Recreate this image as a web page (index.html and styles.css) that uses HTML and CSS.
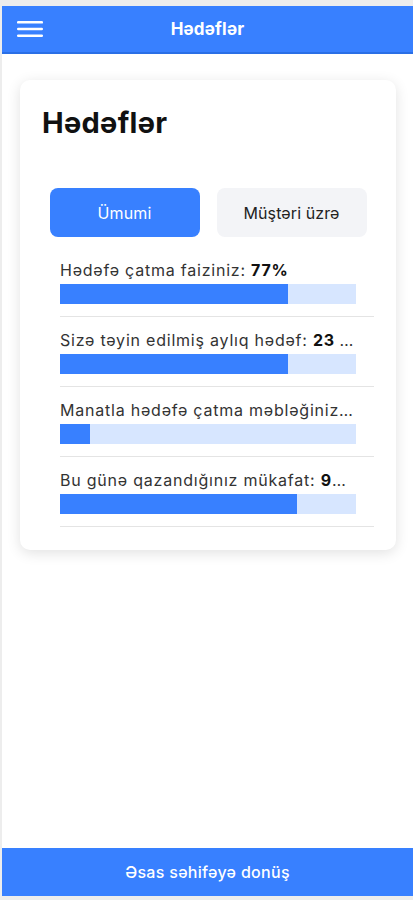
FILE: index.html
```html
<!DOCTYPE html>
<html lang="az">
<head>
<meta charset="utf-8">
<title>Hədəflər</title>
<link rel="stylesheet" href="styles.css">
</head>
<body>
<div class="app">
  <header class="topbar">
    <button class="menu" aria-label="Menu">
      <svg width="26" height="18" viewBox="0 0 26 18"><rect x="0" y="1" width="26" height="2.6" rx="1.2" fill="#fff"/><rect x="0" y="7.7" width="26" height="2.6" rx="1.2" fill="#fff"/><rect x="0" y="14.4" width="26" height="2.6" rx="1.2" fill="#fff"/></svg>
    </button>
    <h1 class="topbar-title">Hədəflər</h1>
  </header>
  <main class="content">
    <section class="card">
      <h2 class="card-title">Hədəflər</h2>
      <div class="tabs">
        <button class="tab tab-active">Ümumi</button>
        <button class="tab">Müştəri üzrə</button>
      </div>
      <ul class="goals">
        <li class="goal">
          <div class="goal-inner">
            <p class="goal-label">Hədəfə çatma faiziniz: <b>77%</b></p>
            <div class="bar"><div class="bar-fill" style="width:77%"></div></div>
          </div>
        </li>
        <li class="goal">
          <div class="goal-inner">
            <p class="goal-label">Sizə təyin edilmiş aylıq hədəf: <b>23 000 AZN</b></p>
            <div class="bar"><div class="bar-fill" style="width:77%"></div></div>
          </div>
        </li>
        <li class="goal">
          <div class="goal-inner">
            <p class="goal-label">Manatla hədəfə çatma məbləğiniz: <b>2 300 AZN</b></p>
            <div class="bar"><div class="bar-fill" style="width:10%"></div></div>
          </div>
        </li>
        <li class="goal">
          <div class="goal-inner">
            <p class="goal-label">Bu günə qazandığınız mükafat: <b>95 AZN</b></p>
            <div class="bar"><div class="bar-fill" style="width:80%"></div></div>
          </div>
        </li>
      </ul>
    </section>
  </main>
  <footer class="footer">
    <button class="footer-btn">Əsas səhifəyə donüş</button>
  </footer>
</div>
</body>
</html>
```
FILE: styles.css
```css
* { box-sizing: border-box; }
html, body { margin: 0; padding: 0; }
body {
  background: #ededed;
  font-family: Inter, "Liberation Sans", Arial, sans-serif;
  height: 900px;
  padding: 6px 0 4px 2px;
}
.app {
  height: 100%;
  display: flex;
  flex-direction: column;
  background: #fff;
}
.topbar {
  height: 48px;
  background: #3880ff;
  border-bottom: 2px solid #2a6fe6;
  display: flex;
  align-items: center;
  justify-content: center;
  position: relative;
}
.menu {
  position: absolute;
  left: 15px;
  top: 14px;
  background: none;
  border: 0;
  padding: 0;
  width: 26px;
  height: 18px;
  display: flex;
}
.topbar-title {
  margin: 0;
  color: #fff;
  font-size: 17px;
  font-weight: 700;
  letter-spacing: 0.2px;
}
.content {
  flex: 1;
  padding: 26px 17px 0 18px;
}
.card {
  background: #fff;
  border-radius: 10px;
  box-shadow: 0 3px 14px rgba(0,0,0,0.12);
  padding: 26px 22px 23px 22px;
}
.card-title {
  margin: 0;
  font-size: 29px;
  line-height: 34px;
  font-weight: 700;
  color: #111;
  letter-spacing: 0.3px;
}
.tabs {
  display: flex;
  justify-content: center;
  gap: 17px;
  margin-top: 48px;
  margin-bottom: 10px;
}
.tab {
  width: 150px;
  height: 49px;
  border: 0;
  border-radius: 8px;
  background: #f3f4f7;
  color: #222;
  font-family: inherit;
  font-size: 16px;
  font-weight: 400;
  letter-spacing: 0.1px;
}
.tab-active {
  background: #3880ff;
  color: #fff;
}
.goals {
  list-style: none;
  margin: 0;
  padding: 0 0 0 18px;
}
.goal {
  border-bottom: 1px solid #e4e4e4;
  padding: 13px 18px 12px 0;
}
.goal-label {
  margin: 0;
  font-size: 16px;
  line-height: 20px;
  color: #333;
  letter-spacing: 0.78px;
  white-space: nowrap;
  overflow: hidden;
  text-overflow: ellipsis;
}
.goal-label b { color: #111; font-weight: 700; }
.bar {
  margin-top: 4px;
  height: 20px;
  background: #d7e6ff;
}
.bar-fill {
  height: 100%;
  background: #3880ff;
}
.footer {
  height: 48px;
  background: #3880ff;
}
.footer-btn {
  width: 100%;
  height: 100%;
  border: 0;
  background: none;
  color: #fff;
  font-family: inherit;
  font-size: 16px;
  font-weight: 500;
  letter-spacing: 0.3px;
}
```
